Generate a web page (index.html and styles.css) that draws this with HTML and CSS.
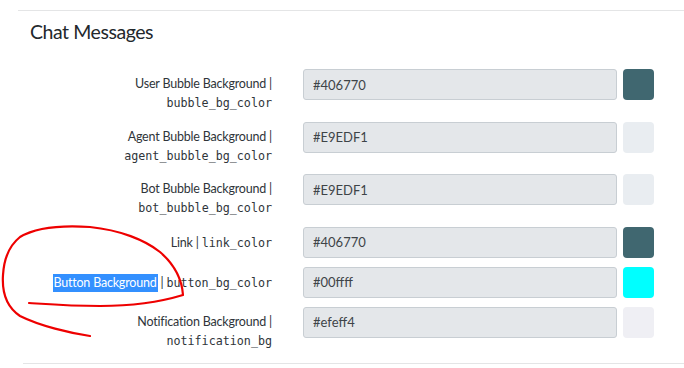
FILE: index.html
```html
<!DOCTYPE html>
<html lang="en">
<head>
  <meta charset="UTF-8" />
  <meta name="viewport" content="width=device-width, initial-scale=1.0"/>
  <title>Widget Settings — Chat Messages</title>
  <link rel="stylesheet" href="styles.css">
</head>
<body>
  <div class="settings">
    <h2 class="section-title">Chat Messages</h2>

    <div class="fields">
      <div class="field">
        <label class="field-label">User Bubble Background |<br><code>bubble_bg_color</code></label>
        <input class="field-input" type="text" value="#406770">
        <span class="swatch" style="background:#406770"></span>
      </div>
      <div class="field">
        <label class="field-label">Agent Bubble Background |<br><code>agent_bubble_bg_color</code></label>
        <input class="field-input" type="text" value="#E9EDF1">
        <span class="swatch" style="background:#E9EDF1"></span>
      </div>
      <div class="field">
        <label class="field-label">Bot Bubble Background |<br><code>bot_bubble_bg_color</code></label>
        <input class="field-input" type="text" value="#E9EDF1">
        <span class="swatch" style="background:#E9EDF1"></span>
      </div>
      <div class="field">
        <label class="field-label single">Link | <code>link_color</code></label>
        <input class="field-input" type="text" value="#406770">
        <span class="swatch" style="background:#406770"></span>
      </div>
      <div class="field">
        <label class="field-label single"><span class="selected">Button Background</span> | <code>button_bg_color</code></label>
        <input class="field-input" type="text" value="#00ffff">
        <span class="swatch" style="background:#00ffff"></span>
      </div>
      <div class="field">
        <label class="field-label">Notification Background |<br><code>notification_bg</code></label>
        <input class="field-input" type="text" value="#efeff4">
        <span class="swatch" style="background:#efeff4"></span>
      </div>
    </div>
  </div>

  <!-- hand-drawn annotation -->
  <svg class="scribble" width="684" height="368" viewBox="0 0 684 368">
    <path d="M90 336 C 70 333, 40 326, 20 316 C 5 306, 2 290, 3 275 C 4 258, 10 245, 20 237 C 35 228, 60 225, 90 227 C 120 230, 145 240, 160 252 C 175 265, 182 280, 183 295 C 160 302, 130 306, 100 306 C 70 306, 45 304, 29 303"
          fill="none" stroke="#ee0000" stroke-width="2.2" stroke-linecap="round" stroke-linejoin="round"/>
  </svg>
</body>
</html>
```

FILE: styles.css
```css
body {
  margin: 0;
  font-family: Lato, 'Noto Sans', sans-serif;
  background-color: #ffffff;
  color: #23282c;
}
.settings {
  margin: 10px 0 0 18px;
  border-top: 1px solid #e4e5e6;
}
.section-title {
  font-size: 19.5px;
  font-weight: 400;
  line-height: 24px;
  letter-spacing: -0.45px;
  margin: 9px 0 0 12px;
  color: #23282c;
}
.fields {
  display: flex;
  flex-direction: column;
  gap: 9px;
  margin: 25px 0 0 5px;
  padding-bottom: 13px;
  border-bottom: 1px solid #e4e5e6;
}
.field {
  display: flex;
  align-items: flex-start;
}
.field-label {
  width: 249px;
  margin-right: 31px;
  padding-top: 5px;
  text-align: right;
  font-size: 12.5px;
  line-height: 19.25px;
  color: #2f353a;
  letter-spacing: -0.2px;
}
.field-label.single {
  padding-top: 6px;
}
.field-label code {
  font-family: 'DejaVu Sans Mono', 'Liberation Mono', monospace;
  font-size: 11.7px;
  line-height: 1;
  letter-spacing: 0;
  color: #2f353a;
}
.selected {
  background-color: #3390ff;
  color: #ffffff;
  padding: 1px 1px 2px 0;
}
.field-input {
  box-sizing: border-box;
  width: 314px;
  height: 31px;
  margin: 0;
  padding: 0 9px;
  border: 1px solid #c8ced3;
  border-radius: 3px;
  background-color: #e4e7ea;
  font-family: Lato, 'Noto Sans', sans-serif;
  font-size: 13px;
  color: #3e4448;
}
.swatch {
  width: 31px;
  height: 31px;
  margin-left: 6px;
  border-radius: 4px;
}
.scribble {
  position: absolute;
  top: 0;
  left: 0;
  pointer-events: none;
}
```
